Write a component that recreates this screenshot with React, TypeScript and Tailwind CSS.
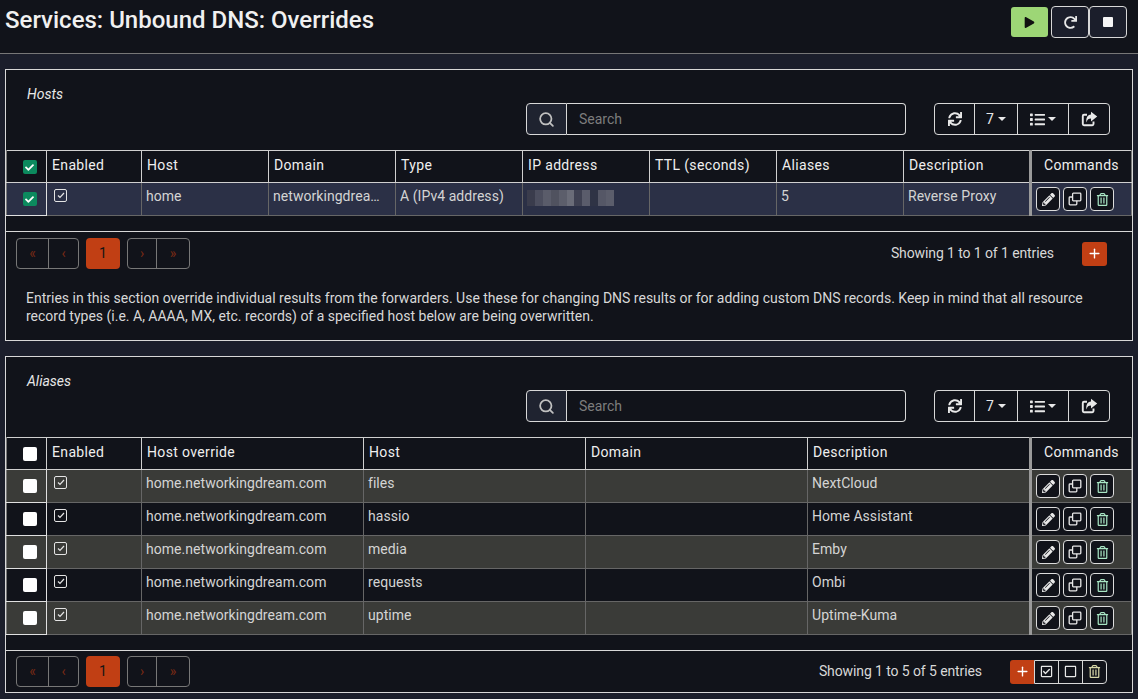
import React from "react";
import { Search, Plus } from "lucide-react";
import { FaSync, FaList, FaPencilAlt, FaRegTrashAlt, FaRegCheckSquare, FaRegSquare, FaPlay, FaRedo, FaCheck } from "react-icons/fa";

const Box = ({ checked }: { checked?: boolean }) => (
  <span className={`inline-flex w-[14px] h-[14px] rounded-[2px] items-center justify-center align-middle ${checked ? "bg-[#0c8a5e]" : "bg-white"}`}>
    {checked && <FaCheck className="text-white text-[9px]" />}
  </span>
);

const Enabled = () => (
  <span className="flex w-[13px] h-[13px] ml-[3px] -mt-[2px] items-center justify-center border border-[#e4e4e4] rounded-[2px]">
    <svg width="8" height="7" viewBox="0 0 8 7"><path d="M1 3.5 L3 5.5 L7 1" fill="none" stroke="#e4e4e4" strokeWidth="1.2" /></svg>
  </span>
);

const Clone = () => (
  <svg width="14" height="14" viewBox="0 0 14 14" fill="none" stroke="currentColor" strokeWidth="1.3">
    <rect x="4.6" y="1.2" width="8.2" height="7.6" rx="0.8" />
    <path d="M4.6 5 H2 a0.8 0.8 0 0 0 -0.8 0.8 V12 a0.8 0.8 0 0 0 0.8 0.8 H8 a0.8 0.8 0 0 0 0.8 -0.8 V8.8" />
  </svg>
);

const Share = () => (
  <svg width="17" height="16" viewBox="0 0 17 16">
    <path d="M12.5 10.5 V13 a1.2 1.2 0 0 1 -1.2 1.2 H3 a1.2 1.2 0 0 1 -1.2 -1.2 V5 A1.2 1.2 0 0 1 3 3.8 H6" fill="none" stroke="currentColor" strokeWidth="1.9" />
    <path d="M10 0.8 L16.2 5.6 L10 10.4 V7.6 C7.6 7.6 6.2 8.6 5.6 11.4 C4.6 7.2 6.4 3.8 10 3.4 Z" fill="currentColor" />
  </svg>
);

const Cmd = ({ children }: { children: React.ReactNode }) => (
  <button className="w-[24px] h-[24px] border border-[#dcdcdc] rounded-[4px] bg-[#11131a] flex items-center justify-center text-[#e8e8e8] text-[13px]">{children}</button>
);

const Commands = () => (
  <div className="flex gap-[3px] pl-[4px]">
    <Cmd><FaPencilAlt /></Cmd>
    <Cmd><Clone /></Cmd>
    <Cmd><FaRegTrashAlt className="text-[#a8e6c4]" /></Cmd>
  </div>
);

const Toolbar = () => (
  <div className="flex h-[32px]">
    <div className="ml-[520px] flex w-[380px] h-full">
      <span className="w-[41px] h-full bg-[#1f2330] border border-[#d8d8d8] rounded-l-[4px] flex items-center justify-center text-[#c0c0c0]"><Search size={17} strokeWidth={2.5} /></span>
      <span className="flex-1 h-full border border-l-0 border-[#d8d8d8] rounded-r-[4px] bg-[#11131a] pl-[12px] flex items-center text-[#7d7d7d] text-[14px]">Search</span>
    </div>
    <div className="ml-[28px] flex h-full border border-[#d8d8d8] rounded-[4px] text-[#e8e8e8] divide-x divide-[#d8d8d8]">
      <span className="w-[40px] flex items-center justify-center text-[14px]"><FaSync /></span>
      <span className="w-[43px] flex items-center justify-center text-[14px] gap-[4px]">7<i className="border-x-[4px] border-x-transparent border-t-[4px] border-t-[#e8e8e8]" /></span>
      <span className="w-[51px] flex items-center justify-center text-[15px] gap-[3px]"><FaList />
        <i className="border-x-[4px] border-x-transparent border-t-[4px] border-t-[#e8e8e8]" /></span>
      <span className="w-[40px] flex items-center justify-center"><Share /></span>
    </div>
  </div>
);

const Pager = () => {
  const wide = "w-[32px] flex items-center justify-center text-[#7a2a14] text-[14px]";
  const narrow = "w-[29px] flex items-center justify-center text-[#7a2a14] text-[14px]";
  return (
    <div className="flex h-[31px] gap-[7px]">
      <div className="flex h-full border border-[#777] rounded-[4px] divide-x divide-[#777]">
        <span className={wide}>«</span><span className={narrow}>‹</span>
      </div>
      <span className="w-[34px] h-full bg-[#c13f14] rounded-[4px] flex items-center justify-center text-[#151515] text-[14px]">1</span>
      <div className="flex h-full border border-[#777] rounded-[4px] divide-x divide-[#777]">
        <span className={narrow}>›</span><span className={wide}>»</span>
      </div>
    </div>
  );
};

type Row = { cells: React.ReactNode[]; bg: string };

const Grid = ({ widths, head, rows, allChecked, rowChecked }: { widths: number[]; head: string[]; rows: Row[]; allChecked?: boolean; rowChecked?: boolean }) => (
  <table className="table-fixed border-collapse w-[1125px] text-[14px]">
    <colgroup>
      <col className="w-[40px]" />
      {widths.map((w, i) => <col key={i} style={{ width: w }} />)}
      <col className="w-[101px]" />
    </colgroup>
    <thead>
      <tr className="h-[32px] border-t border-[#d0d0d0]">
        <th className="border-l border-l-[#777] border-r border-b border-[#d0d0d0] text-center pl-[6px]"><Box checked={allChecked} /></th>
        {head.map((h) => <th key={h} className="border-r border-b border-[#d0d0d0] font-normal tracking-[0.35px] text-left px-[5px] pb-[2px] text-[#efefef] truncate">{h}</th>)}
        <th className="border-l-[3px] border-l-[#9a9a9a] border-r border-r-[#777] border-b border-[#d0d0d0] font-normal tracking-[0.35px] text-center pb-[2px] text-[#efefef]">Commands</th>
      </tr>
    </thead>
    <tbody>
      {rows.map((r, i) => (
        <tr key={i} className={`h-[33px] ${r.bg}`}>
          <td className="border-l border-l-[#777] border-r border-b border-[#e0e0e0] text-center pl-[6px] pb-[1px]"><Box checked={rowChecked} /></td>
          {r.cells.map((c, j) => (
            <td key={j} className="border-r border-b border-[#666] px-[4px] pb-[5px] text-[#d4d4d4] tracking-[0.05px] truncate">{c}</td>
          ))}
          <td className="border-l-[3px] border-l-[#9a9a9a] border-r border-r-[#777] border-b border-[#666] p-0"><Commands /></td>
        </tr>
      ))}
    </tbody>
  </table>
);

const Section = ({ title, children }: { title: string; children: React.ReactNode }) => (
  <section className="border border-[#d8d8d8] bg-[#11131a] mx-[5px] w-[1128px]">
    <div className="h-[33px] pt-[15px] pl-[21px] italic text-[14px] leading-[18px] text-[#e8e8e8]">{title}</div>
    <Toolbar />
    <div className="h-[15px]" />
    {children}
  </section>
);

export default function App() {
  const ip = (
    <div className="flex h-[16px] w-[87px] mt-[3px]">
      {["#3a3c4c", "#4c4e5e", "#5a5c6a", "#50525f", "#5c5e6b", "#6a6c78", "#3f4152", "#5a5c6b", "#2f3345", "#555766", "#5b5d6b"].map((c, i) => (
        <div key={i} className="flex-1" style={{ backgroundColor: c }} />
      ))}
    </div>
  );
  return (
    <div className="w-[1138px] h-[699px] overflow-hidden bg-[#1b1e2b]" style={{ fontFamily: '"Roboto", "Liberation Sans", sans-serif' }}>
      <header className="h-[54px] bg-[#11131a] border-b border-[#777] flex items-start justify-between pl-[5px] pr-[11px]">
        <h1 className="text-[24px] leading-[40px] font-medium text-[#f0f0f0]">Services: Unbound DNS: Overrides</h1>
        <div className="flex items-center mt-[6px] h-[32px]">
          <span className="w-[37px] h-[30px] bg-[#9dd676] rounded-[3px] flex items-center justify-center text-[#111] text-[11px] mr-[3px]"><FaPlay /></span>
          <span className="w-[38px] h-[32px] border border-[#d8d8d8] rounded-[4px] bg-[#1b1e2b] flex items-center justify-center text-[#e8e8e8] text-[13px]"><FaRedo /></span>
          <span className="w-[38px] h-[32px] border border-[#d8d8d8] rounded-[4px] bg-[#1b1e2b] flex items-center justify-center"><i className="block w-[10px] h-[10px] rounded-[1px] bg-[#f5f5f5]" /></span>
        </div>
      </header>
      <div className="h-[15px]" />
      <Section title="Hosts">
        <Grid
          allChecked rowChecked
          widths={[95, 127, 127, 127, 127, 127, 127, 127]}
          head={["Enabled", "Host", "Domain", "Type", "IP address", "TTL (seconds)", "Aliases", "Description"]}
          rows={[{ bg: "bg-[#2b3046]", cells: [<Enabled />, "home", "networkingdrea…", "A (IPv4 address)", ip, "", "5", "Reverse Proxy"] }]}
        />
        <div className="h-[15px]" />
        <div className="border-t border-[#d8d8d8] px-[10px] pt-[6px] pb-[15px]">
          <div className="flex items-center justify-between">
            <Pager />
            <div className="flex items-center text-[14px] tracking-[-0.1px] text-[#d8d8d8]">
              <span>Showing 1 to 1 of 1 entries</span>
              <span className="ml-[28px] mr-[15px] w-[25px] h-[24px] rounded-[3px] bg-[#c13f14] flex items-center justify-center text-white"><Plus size={15} strokeWidth={2.2} /></span>
            </div>
          </div>
          <p className="pl-[10px] mt-[20px] text-[14px] leading-[18px] text-[#d8d8d8]">
            Entries in this section override individual results from the forwarders. Use these for changing DNS results or for adding custom DNS records. Keep in mind that all resource record types (i.e. A, AAAA, MX, etc. records) of a specified host below are being overwritten.
          </p>
        </div>
      </Section>
      <div className="h-[15px]" />
      <Section title="Aliases">
        <Grid
          widths={[95, 222, 222, 222, 223]}
          head={["Enabled", "Host override", "Host", "Domain", "Description"]}
          rows={[
            ["files", "NextCloud"], ["hassio", "Home Assistant"], ["media", "Emby"], ["requests", "Ombi"], ["uptime", "Uptime-Kuma"],
          ].map(([h, d], i) => ({
            bg: i % 2 === 0 ? "bg-[#3a3b38]" : "bg-[#11131a]",
            cells: [<Enabled />, "home.networkingdream.com", h, "", d],
          }))}
        />
        <div className="h-[15px]" />
        <div className="border-t border-[#d8d8d8] px-[10px] pt-[5px] pb-[5px]">
          <div className="flex items-center justify-between">
            <Pager />
            <div className="flex items-center text-[14px] tracking-[-0.1px] text-[#d8d8d8]">
              <span>Showing 1 to 5 of 5 entries</span>
              <span className="ml-[28px] w-[24px] h-[24px] rounded-l-[3px] bg-[#c13f14] flex items-center justify-center text-white"><Plus size={15} strokeWidth={2.2} /></span>
              <span className="mr-[15px] flex h-[24px] border border-[#d8d8d8] rounded-r-[4px] divide-x divide-[#d8d8d8] text-[#e8e8e8] text-[13px]">
                <span className="w-[24px] flex items-center justify-center"><FaRegCheckSquare /></span>
                <span className="w-[24px] flex items-center justify-center"><FaRegSquare /></span>
                <span className="w-[23px] flex items-center justify-center"><FaRegTrashAlt className="text-[#d8d8a8]" /></span>
              </span>
            </div>
          </div>
        </div>
      </Section>
    </div>
  );
}
